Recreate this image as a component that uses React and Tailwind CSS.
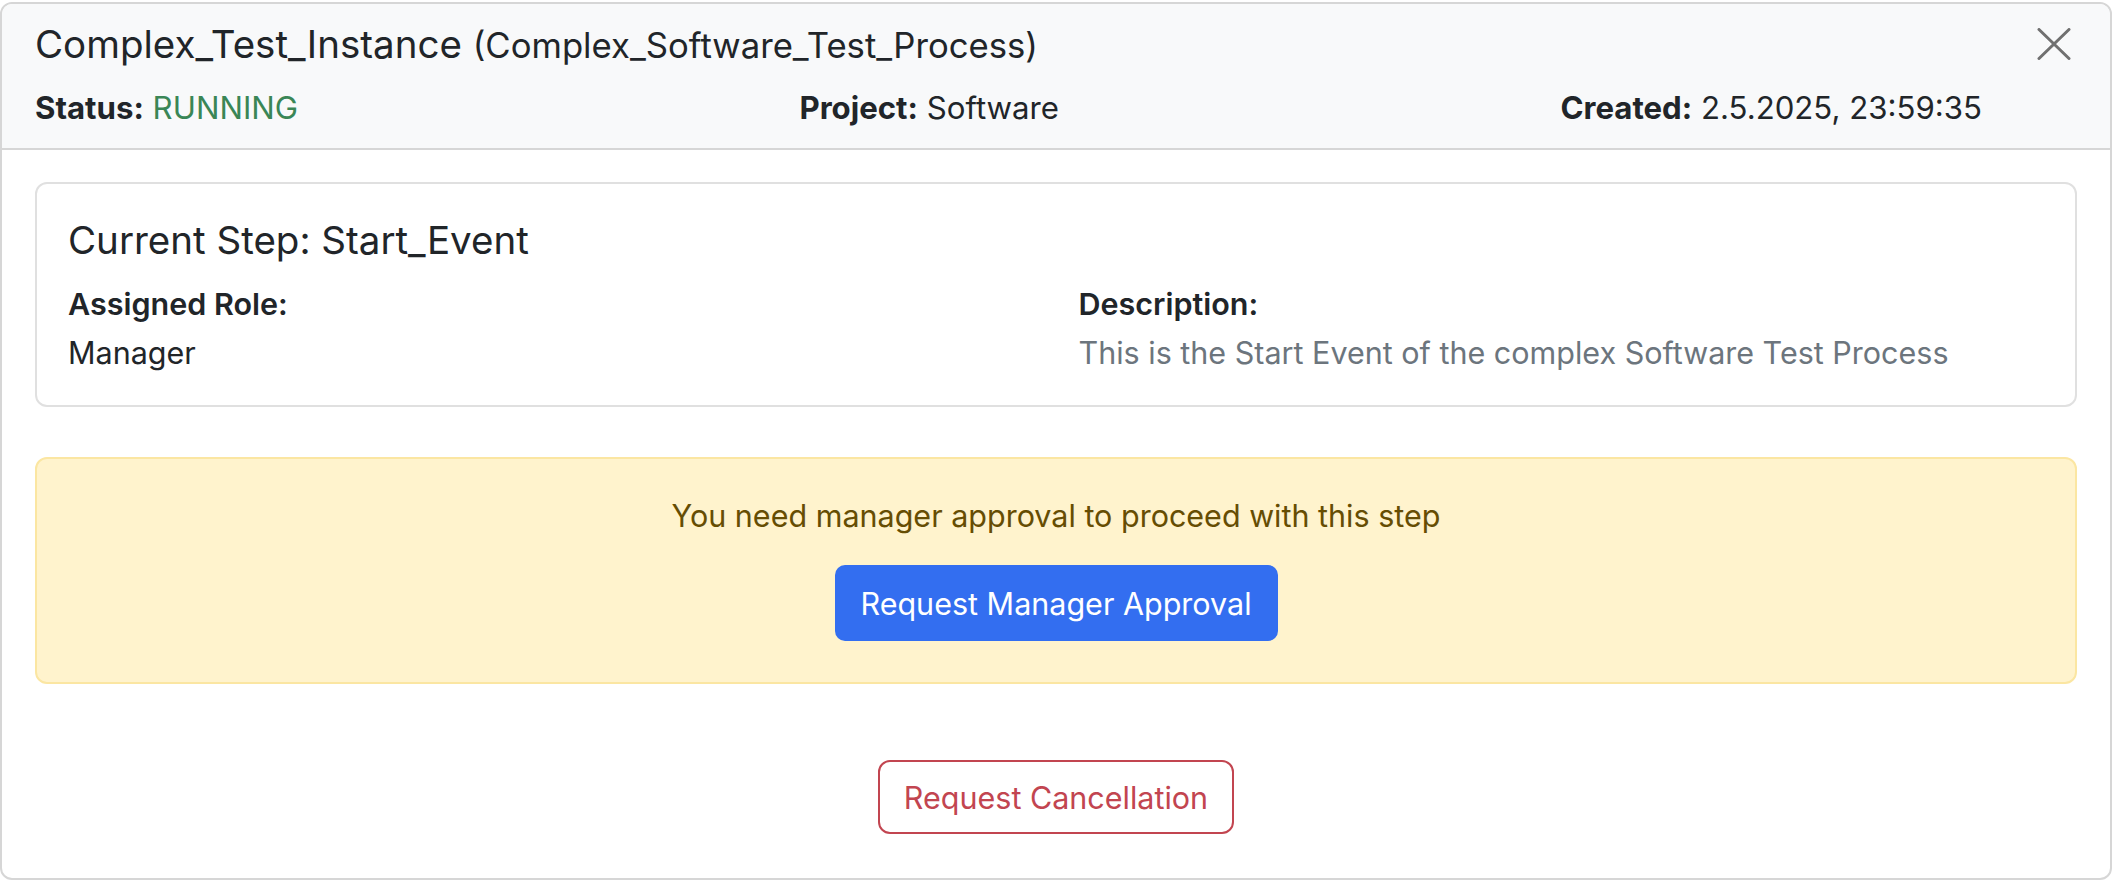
const font = { fontFamily: "Inter, 'Liberation Sans', sans-serif" };

function CloseIcon() {
  return (
    <svg width="34" height="32" viewBox="0 0 34 32" fill="none">
      <path d="M2 1.5 L32 30.5 M32 1.5 L2 30.5" stroke="#707070" strokeWidth="3" strokeLinecap="round" />
    </svg>
  );
}

export default function App() {
  return (
    <div className="bg-white min-h-screen pt-[2px]" style={font}>
      <div className="w-[2112px] h-[878px] border-2 border-[#d6d6d6] rounded-[12px] overflow-hidden flex flex-col text-[#212529]">
        {/* header */}
        <div className="flex bg-[#f8f9fa] border-b-2 border-[#d6d6d6] h-[146px] shrink-0">
          <div className="flex-1 min-w-0 pl-[33px] pt-[18px]">
            <h5 className="text-[38.5px] leading-[45px] font-normal">
              Complex_Test_Instance{" "}
              <small className="text-[34.7px]">(Complex_Software_Test_Process)</small>
            </h5>
            <div className="flex justify-between mt-[18px] text-[31.2px] leading-[45px]">
              <div>
                <span className="font-bold">Status:</span>{" "}
                <span className="text-[#3a8656]">RUNNING</span>
              </div>
              <div>
                <span className="font-bold">Project:</span> Software
              </div>
              <div>
                <span className="font-bold">Created:</span> 2.5.2025, 23:59:35
              </div>
            </div>
          </div>
          <button className="w-[128px] shrink-0 pt-[24px] pl-[55px] self-start">
            <CloseIcon />
          </button>
        </div>

        {/* body */}
        <div className="flex-1 px-[33px] pt-[32px] pb-[43px] flex flex-col text-[30.5px] leading-[45px]">
          <div className="border-2 border-[#e0e0e0] rounded-[12px] h-[225px] px-[31px] pt-[34px]">
            <h5 className="text-[38.5px] leading-[45px] font-normal">
              Current Step: Start_Event
            </h5>
            <div className="grid grid-cols-2 gap-x-[45px] mt-[18px]">
              <div>
                <div className="font-semibold">Assigned Role:</div>
                <div className="mt-[4px]">Manager</div>
              </div>
              <div>
                <div className="font-semibold">Description:</div>
                <div className="mt-[4px] text-[#6c757d]">
                  This is the Start Event of the complex Software Test Process
                </div>
              </div>
            </div>
          </div>

          <div className="mt-[50px] h-[227px] bg-[#fff3cd] border-2 border-[#fbe6a2] rounded-[12px] flex flex-col items-center pt-[34px]">
            <p className="text-[#664d03]">You need manager approval to proceed with this step</p>
            <button className="mt-[27px] h-[76px] w-[443px] rounded-[10px] bg-[#336ef0] text-white">
              Request Manager Approval
            </button>
          </div>

          <div className="mt-[76px] flex justify-center">
            <button className="h-[74px] w-[356px] rounded-[12px] border-2 border-[#c24550] text-[#c24550]">
              Request Cancellation
            </button>
          </div>
        </div>
      </div>
    </div>
  );
}
